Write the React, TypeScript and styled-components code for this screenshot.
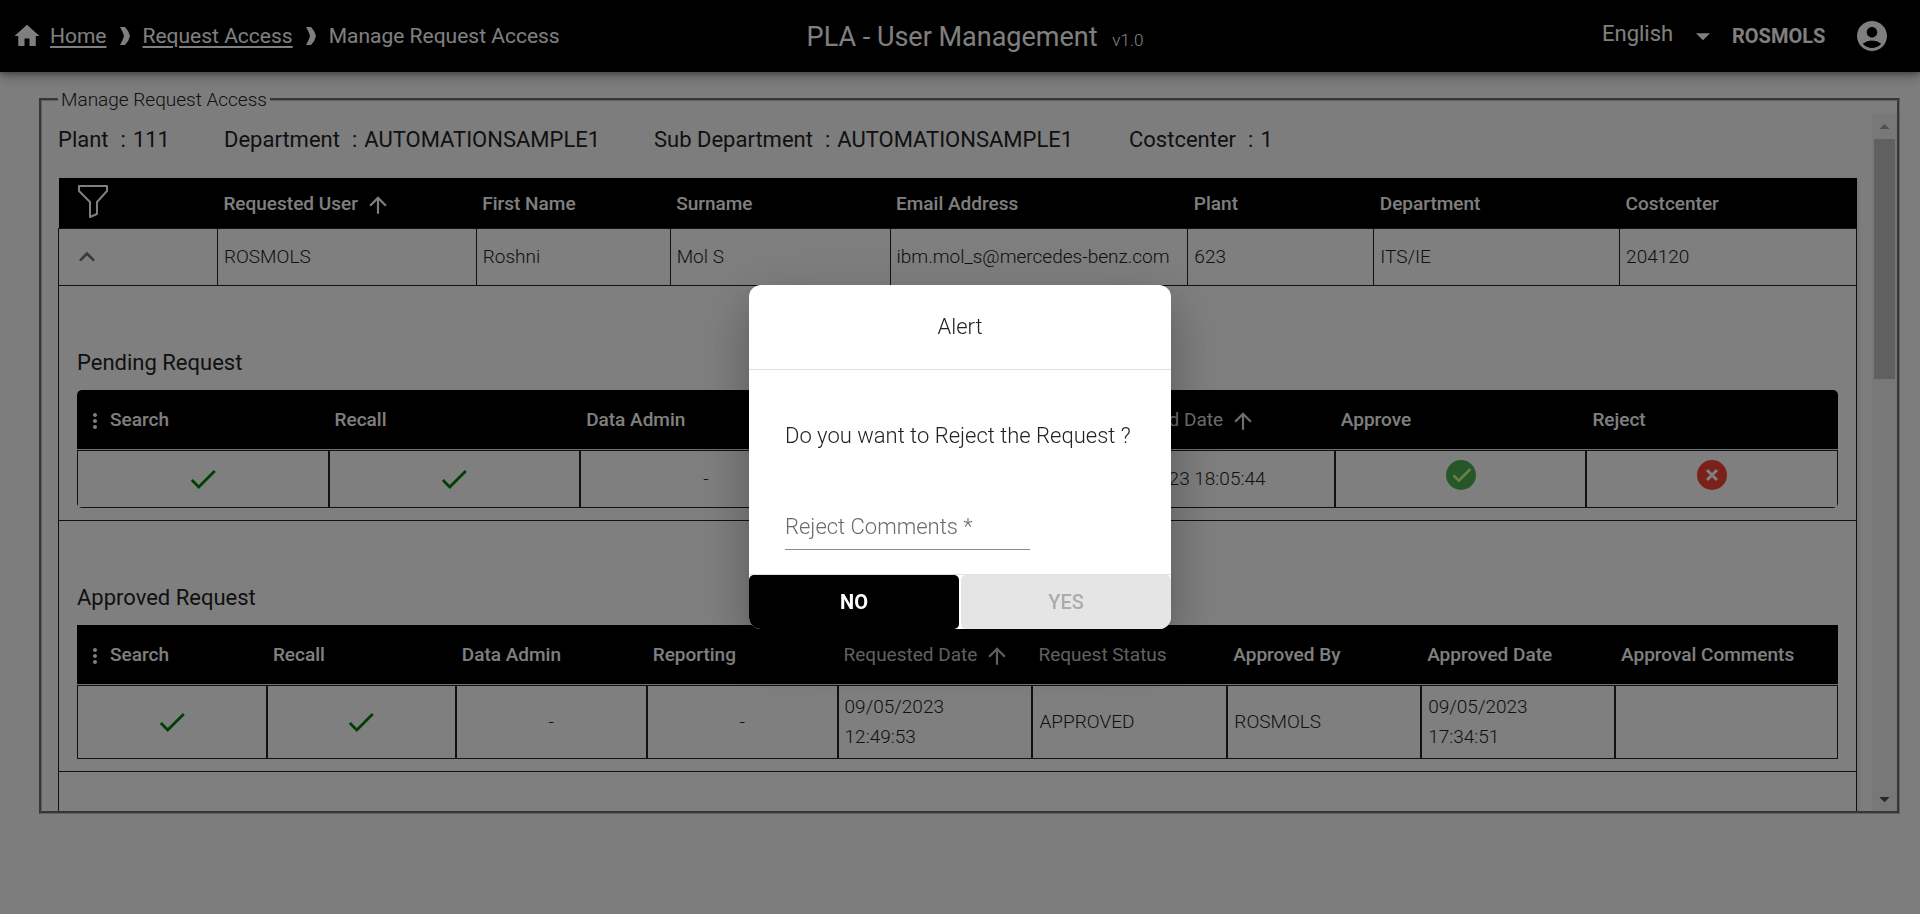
import React from "react";
import styled, { createGlobalStyle } from "styled-components";
import {
  MdAccountCircle,
  MdArrowDropDown,
  MdArrowDropUp,
  MdArrowUpward,
  MdCheck,
  MdHome,
  MdKeyboardArrowUp,
  MdMoreVert,
} from "react-icons/md";

const GlobalStyle = createGlobalStyle`
  *, *::before, *::after { box-sizing: border-box; }
  body {
    margin: 0;
    background: #fafafa;
    color: #222;
    font-family: Roboto, "Liberation Sans", sans-serif;
    font-size: 19px;
    line-height: 30px;
  }
  button, input, select { font: inherit; }
`;

const Page = styled.div`
  display: flex;
  flex-direction: column;
  min-height: 100vh;
`;

const TopBar = styled.header`
  display: grid;
  grid-template-columns: 1fr auto 1fr;
  align-items: center;
  height: 72px;
  padding: 0 30px 0 12px;
  background: #000;
  color: #fff;
  box-shadow: 0 2px 5px rgba(0, 0, 0, 0.3), 0 5px 12px rgba(0, 0, 0, 0.25);
`;

const Breadcrumb = styled.nav`
  display: flex;
  align-items: center;
  font-size: 21px;
`;

const HomeIcon = styled(MdHome)`
  width: 30px;
  height: 30px;
  margin-right: 8px;
`;

const Crumb = styled.a`
  color: #fff;
  text-decoration: underline;
  text-decoration-thickness: 2px;
  text-underline-offset: 3px;
`;

const Separator = styled.svg`
  width: 10px;
  height: 18px;
  margin: 0 13px;
  fill: #fff;
`;

const AppTitle = styled.h1`
  margin: 0;
  padding: 4px 0 0 48px;
  font-size: 27px;
  font-weight: 400;
`;

const Version = styled.small`
  margin-left: 8px;
  font-size: 17px;
  font-weight: 300;
`;

const UserArea = styled.div`
  display: flex;
  align-items: center;
  justify-content: flex-end;
`;

const Language = styled.label`
  display: flex;
  align-items: center;
  font-size: 22px;
  padding-bottom: 4px;
`;

const LanguageSelect = styled.select`
  width: 84px;
  padding: 0;
  border: 0;
  appearance: none;
  background: transparent;
  color: #fff;
`;

const LanguageArrow = styled(MdArrowDropDown)`
  width: 34px;
  height: 34px;
  margin: 4px 12px 0 0;
`;

const UserName = styled.span`
  width: 122px;
  font-size: 20px;
  font-weight: 700;
`;

const IconButton = styled.button`
  display: inline-flex;
  padding: 0;
  border: 0;
  background: none;
  color: inherit;
`;

const Panel = styled.fieldset`
  min-width: 0;
  margin: 16px 20px 0 39px;
  padding: 3px 0 0 16px;
  border: 3px groove #c0c0c0;
`;

const PanelTitle = styled.legend`
  height: 23px;
  padding: 0 3px;
  font-weight: 300;
  line-height: 23px;
`;

const PanelBody = styled.div`
  display: flex;
  height: calc(100vh - 217px);
`;

const PanelContent = styled.div`
  flex: 1;
  min-width: 0;
  overflow: hidden;
  padding-right: 15px;
`;

const ScrollBar = styled.div`
  display: flex;
  flex-direction: column;
  width: 25px;
  background: #f1f1f1;
`;

const ScrollArrow = styled.button<{ $off?: boolean }>`
  display: flex;
  align-items: center;
  justify-content: center;
  height: 25px;
  padding: 0;
  border: 0;
  background: none;
  color: ${(p) => (p.$off ? "#a3a3a3" : "#505050")};
`;

const ScrollTrack = styled.div`
  flex: 1;
  padding: 0 2px;
`;

const ScrollThumb = styled.div`
  height: 240px;
  background: #c1c1c1;
`;

const Summary = styled.dl`
  display: grid;
  grid-template-columns: 166px 430px 475px auto;
  height: 64px;
  margin: 0;
  padding: 11px 0 0;
  font-size: 22px;
`;

const SummaryItem = styled.div`
  display: flex;
  gap: 7px;
  white-space: nowrap;
`;

const Term = styled.dt`
  display: flex;
  gap: 12px;

  &::after { content: ":"; }
`;

const Detail = styled.dd`
  margin: 0;
`;

const UserTable = styled.table`
  width: 100%;
  table-layout: fixed;
  border-collapse: collapse;
  background: #fff;
  box-shadow: 0 2px 5px rgba(0, 0, 0, 0.2);
`;

const UserHead = styled.th`
  height: 50px;
  padding: 2px 6px 0;
  background: #000;
  color: #fff;
  font-weight: 500;
  text-align: left;
`;

const UserCell = styled.td`
  height: 57px;
  padding: 0 6px;
  border: 1px solid #222;
  font-weight: 300;
  white-space: nowrap;
`;

const ToggleButton = styled(IconButton)`
  margin-left: 6px;
  color: #757575;
  vertical-align: middle;
`;

const FilterButton = styled(IconButton)`
  margin: 0 0 4px 13px;
  vertical-align: middle;
`;

const SectionCell = styled.td`
  padding: 59px 18px 12px;
  border: 1px solid #222;
`;

const SpacerCell = styled.td`
  height: 60px;
  border: 1px solid #222;
`;

const SectionTitle = styled.h2`
  margin: 0;
  padding: 1px 0 10px;
  font-size: 22px;
  font-weight: 400;
  line-height: 34px;
`;

const RequestTable = styled.table<{ $rounded?: boolean }>`
  width: 100%;
  table-layout: fixed;
  border-collapse: separate;
  border-spacing: 0;
  border-radius: ${(p) => (p.$rounded ? "5px" : "0")};
  overflow: hidden;
`;

const RequestHead = styled.th<{ $soft?: boolean }>`
  height: 60px;
  padding: 2px 6px 0;
  background: #000;
  border-bottom: 1px solid #e0e0e0;
  color: ${(p) => (p.$soft ? "#dcdcdc" : "#fff")};
  font-weight: ${(p) => (p.$soft ? 400 : 500)};
  text-align: left;
  white-space: nowrap;
`;

const MoreIcon = styled(MdMoreVert)`
  width: 24px;
  height: 24px;
  margin-right: 3px;
  vertical-align: middle;
`;

const RequestCell = styled.td<{ $tall?: boolean; $center?: boolean }>`
  height: ${(p) => (p.$tall ? 74 : 58)}px;
  padding: 0 6px;
  border: 1px solid #222;
  font-weight: 300;
  text-align: ${(p) => (p.$center ? "center" : "left")};
`;

const GreenCheck = styled(MdCheck)`
  width: 34px;
  height: 34px;
  color: #008000;
  vertical-align: middle;
`;

const SortArrow = styled(MdArrowUpward)`
  width: 26px;
  height: 26px;
  margin-left: 7px;
  vertical-align: middle;
`;

const ActionButton = styled(IconButton)`
  display: flex;
  margin: 0 auto 8px;
`;

const Backdrop = styled.div`
  position: fixed;
  inset: 0;
  display: flex;
  align-items: center;
  justify-content: center;
  background: rgba(0, 0, 0, 0.5);
`;

const Dialog = styled.form`
  width: 422px;
  overflow: hidden;
  border-radius: 12px;
  background: #fff;
  box-shadow: 0 14px 19px -9px rgba(0, 0, 0, 0.2),
    0 30px 48px 4px rgba(0, 0, 0, 0.14), 0 11px 58px 10px rgba(0, 0, 0, 0.12);
`;

const DialogTitle = styled.h2`
  margin: 0;
  padding: 27px 0;
  border-bottom: 1px solid #e0e0e0;
  font-size: 22px;
  font-weight: 300;
  text-align: center;
`;

const DialogBody = styled.div`
  padding: 51px 36px 24px;
  font-size: 22px;
  font-weight: 300;
`;

const Question = styled.p`
  margin: 0 0 56px;
  white-space: nowrap;
`;

const CommentInput = styled.input`
  display: block;
  width: 245px;
  height: 43px;
  padding: 0 0 4px;
  border: 0;
  border-bottom: 1px solid #8c8c8c;
  border-radius: 0;
  background: transparent;
  font-weight: 300;
  outline: 0;

  &::placeholder { color: #6b6b6b; opacity: 1; }
`;

const DialogActions = styled.div`
  display: flex;
  gap: 2px;
  border-top: 1px solid #e0e0e0;
`;

const DialogButton = styled.button<{ $primary?: boolean }>`
  flex: 1;
  height: 54px;
  border: 0;
  border-radius: 5px;
  background: ${(p) => (p.$primary ? "#000" : "#e5e5e5")};
  color: ${(p) => (p.$primary ? "#fff" : "#ababab")};
  font-size: 20px;
  font-weight: ${(p) => (p.$primary ? 700 : 500)};
`;

const Chevron = () => (
  <Separator viewBox="0 0 10 18" aria-hidden="true">
    <path d="M0 0h5q4 4 5 9-1 5-5 9H0q3-5 4-9-1-4-4-9z" />
  </Separator>
);

const FilterIcon = () => (
  <svg width="30" height="33" viewBox="0 0 30 33" fill="none" stroke="#fff" strokeWidth="2">
    <path d="M1 1h28v5L19 17v12l-7 3V17L1 6z" strokeLinejoin="round" />
  </svg>
);

const ApproveIcon = () => (
  <svg width="30" height="30" viewBox="0 0 48 48">
    <circle cx="24" cy="24" r="24" fill="#4caf50" />
    <path d="M37.5 12.8 20.5 29.8l-7-7-3 3L20.5 36l20-20z" fill="#ccff90" />
  </svg>
);

const RejectIcon = () => (
  <svg width="30" height="30" viewBox="0 0 30 30">
    <circle cx="15" cy="15" r="15" fill="#f44336" />
    <path d="M10 10l10 10M20 10L10 20" stroke="#fff" strokeWidth="3" />
  </svg>
);

const userColumns = [159, 259, 194, 220, 298, 186, 246, 237];
const userHeads = ["First Name", "Surname", "Email Address", "Plant", "Department", "Costcenter"];
const userValues = ["ROSMOLS", "Roshni", "Mol S", "ibm.mol_s@mercedes-benz.com", "623", "ITS/IE", "204120"];

const summary = [
  ["Plant", "111"],
  ["Department", "AUTOMATIONSAMPLE1"],
  ["Sub Department", "AUTOMATIONSAMPLE1"],
  ["Costcenter", "1"],
];

type Column = { label: string; weight: number; sorted?: boolean; soft?: boolean };

const pendingColumns: Column[] = [
  { label: "Search", weight: 1 },
  { label: "Recall", weight: 1 },
  { label: "Data Admin", weight: 1 },
  { label: "Reporting", weight: 1 },
  { label: "Requested Date", weight: 1, sorted: true, soft: true },
  { label: "Approve", weight: 1 },
  { label: "Reject", weight: 1 },
];

const approvedColumns: Column[] = [
  { label: "Search", weight: 190 },
  { label: "Recall", weight: 189 },
  { label: "Data Admin", weight: 191 },
  { label: "Reporting", weight: 191 },
  { label: "Requested Date", weight: 195, sorted: true, soft: true },
  { label: "Request Status", weight: 195, soft: true },
  { label: "Approved By", weight: 194 },
  { label: "Approved Date", weight: 194 },
  { label: "Approval Comments", weight: 223 },
];

// Turns relative weights into percentage columns so tables follow their container.
const Columns = ({ weights }: { weights: number[] }) => {
  const total = weights.reduce((sum, w) => sum + w, 0);
  return (
    <colgroup>
      {weights.map((w, i) => (
        <col key={i} style={{ width: `${(w / total) * 100}%` }} />
      ))}
    </colgroup>
  );
};

const RequestHeader = ({ columns }: { columns: Column[] }) => (
  <thead>
    <tr>
      {columns.map((c, i) => (
        <RequestHead key={c.label} $soft={c.soft} scope="col">
          {i === 0 && <MoreIcon />}
          {c.label}
          {c.sorted && <SortArrow />}
        </RequestHead>
      ))}
    </tr>
  </thead>
);

export default function App() {
  return (
    <>
      <GlobalStyle />
      <Page>
        <TopBar>
          <Breadcrumb aria-label="Breadcrumb">
            <HomeIcon />
            <Crumb href="#home">Home</Crumb>
            <Chevron />
            <Crumb href="#request">Request Access</Crumb>
            <Chevron />
            <span>Manage Request Access</span>
          </Breadcrumb>
          <AppTitle>
            PLA - User Management <Version>v1.0</Version>
          </AppTitle>
          <UserArea>
            <Language>
              <LanguageSelect aria-label="Language" defaultValue="en">
                <option value="en">English</option>
              </LanguageSelect>
              <LanguageArrow />
            </Language>
            <UserName>ROSMOLS</UserName>
            <IconButton type="button" aria-label="Account">
              <MdAccountCircle size={36} />
            </IconButton>
          </UserArea>
        </TopBar>

        <Panel>
          <PanelTitle>Manage Request Access</PanelTitle>
          <PanelBody>
            <PanelContent>
              <Summary>
                {summary.map(([term, detail]) => (
                  <SummaryItem key={term}>
                    <Term>{term}</Term>
                    <Detail>{detail}</Detail>
                  </SummaryItem>
                ))}
              </Summary>
              <UserTable>
                <Columns weights={userColumns} />
                <thead>
                  <tr>
                    <UserHead scope="col">
                      <FilterButton type="button" aria-label="Filter"><FilterIcon /></FilterButton>
                    </UserHead>
                    <UserHead scope="col">Requested User<SortArrow /></UserHead>
                    {userHeads.map((h) => (
                      <UserHead key={h} scope="col">{h}</UserHead>
                    ))}
                  </tr>
                </thead>
                <tbody>
                  <tr>
                    <UserCell>
                      <ToggleButton type="button" aria-label="Collapse row">
                        <MdKeyboardArrowUp size={32} />
                      </ToggleButton>
                    </UserCell>
                    {userValues.map((v) => (
                      <UserCell key={v}>{v}</UserCell>
                    ))}
                  </tr>
                  <tr>
                    <SectionCell colSpan={8}>
                      <SectionTitle>Pending Request</SectionTitle>
                      <RequestTable $rounded>
                        <Columns weights={pendingColumns.map((c) => c.weight)} />
                        <RequestHeader columns={pendingColumns} />
                        <tbody>
                          <tr>
                            <RequestCell $center><GreenCheck /></RequestCell>
                            <RequestCell $center><GreenCheck /></RequestCell>
                            <RequestCell $center>-</RequestCell>
                            <RequestCell $center>-</RequestCell>
                            <RequestCell>09/05/2023 18:05:44</RequestCell>
                            <RequestCell>
                              <ActionButton type="button" aria-label="Approve"><ApproveIcon /></ActionButton>
                            </RequestCell>
                            <RequestCell>
                              <ActionButton type="button" aria-label="Reject"><RejectIcon /></ActionButton>
                            </RequestCell>
                          </tr>
                        </tbody>
                      </RequestTable>
                    </SectionCell>
                  </tr>
                  <tr>
                    <SectionCell colSpan={8}>
                      <SectionTitle>Approved Request</SectionTitle>
                      <RequestTable>
                        <Columns weights={approvedColumns.map((c) => c.weight)} />
                        <RequestHeader columns={approvedColumns} />
                        <tbody>
                          <tr>
                            <RequestCell $tall $center><GreenCheck /></RequestCell>
                            <RequestCell $tall $center><GreenCheck /></RequestCell>
                            <RequestCell $tall $center>-</RequestCell>
                            <RequestCell $tall $center>-</RequestCell>
                            <RequestCell $tall>09/05/2023<br />12:49:53</RequestCell>
                            <RequestCell $tall>APPROVED</RequestCell>
                            <RequestCell $tall>ROSMOLS</RequestCell>
                            <RequestCell $tall>09/05/2023<br />17:34:51</RequestCell>
                            <RequestCell $tall />
                          </tr>
                        </tbody>
                      </RequestTable>
                    </SectionCell>
                  </tr>
                  <tr>
                    <SpacerCell colSpan={8} />
                  </tr>
                </tbody>
              </UserTable>
            </PanelContent>
            <ScrollBar>
              <ScrollArrow type="button" aria-label="Scroll up" $off><MdArrowDropUp size={30} /></ScrollArrow>
              <ScrollTrack><ScrollThumb /></ScrollTrack>
              <ScrollArrow type="button" aria-label="Scroll down"><MdArrowDropDown size={30} /></ScrollArrow>
            </ScrollBar>
          </PanelBody>
        </Panel>
      </Page>

      <Backdrop>
        <Dialog role="dialog" aria-labelledby="alert-title">
          <DialogTitle id="alert-title">Alert</DialogTitle>
          <DialogBody>
            <Question>Do you want to Reject the Request ?</Question>
            <CommentInput aria-label="Reject Comments" placeholder="Reject Comments *" required />
          </DialogBody>
          <DialogActions>
            <DialogButton type="button" $primary>NO</DialogButton>
            <DialogButton type="submit" disabled>YES</DialogButton>
          </DialogActions>
        </Dialog>
      </Backdrop>
    </>
  );
}
